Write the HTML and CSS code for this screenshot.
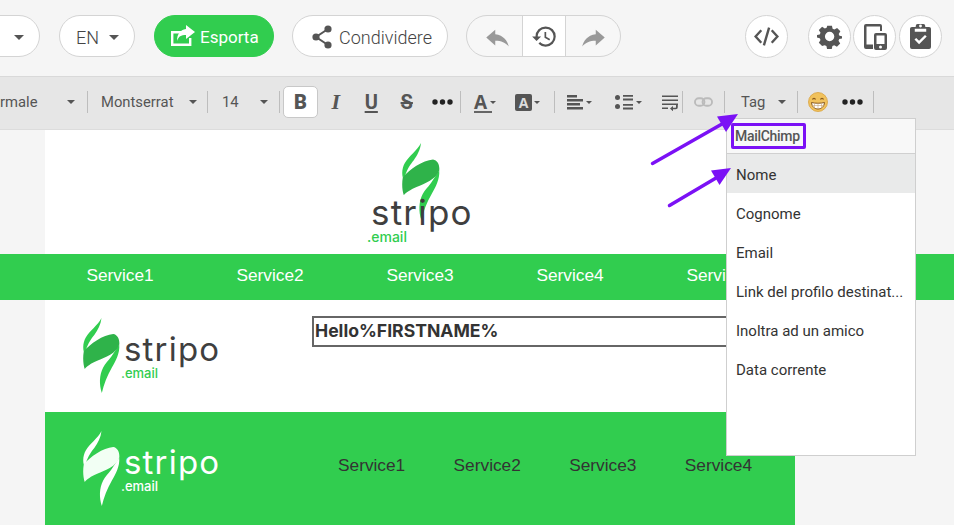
FILE: index.html
```html
<!DOCTYPE html>
<html lang="it">
<head>
<meta charset="utf-8">
<title>Stripo editor</title>
<link rel="stylesheet" href="styles.css">
</head>
<body>
<svg class="defs" width="0" height="0">
  <defs>
    <symbol id="mark" viewBox="0 0 110 224">
      <path class="blade" d="M55 0C53 20 44 36 34 50 24 62 16 74 8 96L2 100C-2 85 2 68 8 58 20 38 44 22 55 0Z"/>
      <path class="blade" d="M108 80C110 105 98 128 86 148 72 172 62 198 56 224 48 200 48 170 60 148 66 136 74 130 84 116Z"/>
      <path class="band" d="M2 100C20 78 60 50 90 48 103 50 110 64 108 80 100 105 66 118 42 128 24 136 10 145 5 152 0 138-1 118 2 100Z"/>
    </symbol>
    <symbol id="reply" viewBox="0 0 24 24"><path d="M10 9V5l-8 7 8 7v-4.100c5.500 0 9 1.600 12 5.100-1-5-4.500-10-12-11z"/></symbol>
    <symbol id="forward" viewBox="0 0 24 24"><path d="M14 9V5l8 7-8 7v-4.100c-5.500 0-9 1.600-12 5.100 1-5 4.500-10 12-11z"/></symbol>
    <symbol id="dots" viewBox="0 0 21 6"><circle cx="3" cy="3" r="2.700"/><circle cx="10.500" cy="3" r="2.700"/><circle cx="18" cy="3" r="2.700"/></symbol>
  </defs>
</svg>

<header class="topbar">
  <div class="pill pill-cut"><span class="caret caret-top"></span></div>
  <div class="pill pill-lang"><span>EN</span><span class="caret caret-top"></span></div>
  <div class="pill pill-export">
    <svg class="ic-export" viewBox="0 0 24 21"><path d="M0 6h11v2.400H2.400v10.200H18V13h2.400v8H0z"/><path d="M15 0l9 7-9 7v-4c-5 0-7.500 1.500-9 6 0-7 3-11 9-12z"/></svg>
    <span>Esporta</span>
  </div>
  <div class="pill pill-share">
    <svg class="ic-share" viewBox="0 0 20 24"><path d="M16 4 4 12l12 8" fill="none" stroke="#555" stroke-width="2"/><circle cx="16" cy="4" r="3.600"/><circle cx="4" cy="12" r="3.600"/><circle cx="16" cy="20" r="3.600"/></svg>
    <span>Condividere</span>
  </div>
  <div class="history">
    <div class="hist-side hist-left"><svg class="ic-arrow"><use href="#reply"/></svg></div>
    <div class="hist-mid">
      <svg class="ic-hist" viewBox="0 0 24 24"><path d="M13 3a9 9 0 0 0-9 9H1l3.890 3.890.07.14L9 12H6c0-3.870 3.130-7 7-7s7 3.130 7 7-3.130 7-7 7c-1.930 0-3.680-.79-4.940-2.060l-1.420 1.420A8.954 8.954 0 0 0 13 21a9 9 0 0 0 0-18zm-1 5v5l4.280 2.540.72-1.210-3.500-2.080V8H12z"/></svg>
    </div>
    <div class="hist-side hist-right"><svg class="ic-arrow"><use href="#forward"/></svg></div>
  </div>
  <div class="circle circle-code">
    <svg class="ic-code" viewBox="0 0 24 20"><path d="M7 4 1.500 10 7 16M17 4l5.500 6-5.500 6M14.500 1.500l-5 17" fill="none" stroke="#555" stroke-width="2.300"/></svg>
  </div>
  <div class="circle circle-gear">
    <svg class="ic-gear" viewBox="0 0 24 24"><path fill-rule="evenodd" d="M9.500 1h5l.7 3.300 1.900.8L20 3.300l3.500 3.500-1.800 2.900.8 1.900 3.300.7v-.3 0L25.800 12v0l0 0-.2 2.500-3.300.7-.8 1.900 1.800 2.900-3.500 3.500-2.900-1.800-1.900.8-.7 3.300h-5l-.7-3.300-1.900-.8L4 22.500 .5 19l1.800-2.900-.8-1.900L-1.800 13.500V11l3.300-.7.8-1.900L.5 5.500 4 2l2.900 1.800 1.900-.8zM12 7.500a5 5 0 1 0 0 10 5 5 0 0 0 0-10z" transform="translate(1.300 .8) scale(.9)"/></svg>
  </div>
  <div class="circle circle-device">
    <svg class="ic-device" viewBox="0 0 24 26"><path d="M3 0h14a2 2 0 0 1 2 2v5h-2V2.500H3.500v18H10V25H3a2 2 0 0 1-2-2V2a2 2 0 0 1 2-2z"/><path fill-rule="evenodd" d="M13 9h9a2 2 0 0 1 2 2v13a2 2 0 0 1-2 2h-9a2 2 0 0 1-2-2V11a2 2 0 0 1 2-2zm.5 2.500V20h8v-8.500zM17.500 21.500a1.500 1.500 0 1 0 0 3 1.500 1.500 0 0 0 0-3z"/></svg>
  </div>
  <div class="circle circle-clip">
    <svg class="ic-clip" viewBox="0 0 22 26"><path fill-rule="evenodd" d="M2 3h4V2a2 2 0 0 1 2-2h6a2 2 0 0 1 2 2v1h4a2 2 0 0 1 2 2v19a2 2 0 0 1-2 2H2a2 2 0 0 1-2-2V5a2 2 0 0 1 2-2zm7.500-1a1.500 1.500 0 1 0 3 0 1.500 1.500 0 0 0-3 0zM5 5v3h12V5zM9.500 21l8-8-1.800-1.700-6.200 6.200-3-3L4.700 16.200z"/></svg>
  </div>
</header>

<nav class="toolbar">
  <div class="tb tb-style"><span class="tb-cut">rmale</span><span class="caret"></span></div>
  <div class="tb tb-font"><span>Montserrat</span><span class="caret"></span></div>
  <div class="tb tb-size"><span>14</span><span class="caret"></span></div>
  <div class="tb tb-format">
    <span class="fmt fmt-b">B</span>
    <span class="fmt fmt-i">I</span>
    <span class="fmt fmt-u">U</span>
    <span class="fmt fmt-s">S</span>
    <svg class="ic-dots"><use href="#dots"/></svg>
  </div>
  <div class="tb tb-color">
    <span class="color-a">A<span class="caret caret-mini"></span></span>
    <span class="color-box"><span class="box-a">A</span><span class="caret caret-mini"></span></span>
  </div>
  <div class="tb tb-para">
    <span class="para-item">
      <svg class="ic-align" viewBox="0 0 16 16"><path d="M0 1h10v2.400H0zM0 5h16v2.400H0zM0 9h13v2.400H0zM0 13h16v2.400H0z"/></svg>
      <span class="caret caret-mini"></span>
    </span>
    <span class="para-item">
      <svg class="ic-list" viewBox="0 0 18 16"><circle cx="2.500" cy="3.500" r="2.500"/><circle cx="2.500" cy="12.500" r="2.500"/><path d="M8 1h10v1.800H8zM8 4.600h10v1.800H8zM8 10h10v1.800H8zM8 13.600h10v1.800H8z"/></svg>
      <span class="caret caret-mini"></span>
    </span>
    <svg class="ic-wrap" viewBox="0 0 16 16"><path d="M0 1h16v1.600H0zM0 5h16v1.600H0zM0 9h16v1.600H0zM0 13h6v1.600H0z"/><path d="M14 9.500h1.800v3.300a2 2 0 0 1-2 2H11v2l-3-2.800L11 11.500v1.700h2.600c.3 0 .4-.1.4-.4z"/></svg>
  </div>
  <div class="tb tb-link">
    <svg class="ic-link" viewBox="0 0 20 12"><rect x="1" y="2" width="10" height="8" rx="4"/><rect x="9" y="2" width="10" height="8" rx="4"/></svg>
  </div>
  <div class="tb tb-tag"><span>Tag</span><span class="caret"></span></div>
  <div class="tb tb-more">
    <svg class="ic-emoji" viewBox="0 0 20 20"><circle cx="10" cy="10" r="9.500" fill="#f1c25c"/><circle cx="10" cy="10" r="9.500" fill="none" stroke="#d9a23e" stroke-width=".8"/><path d="M3.500 10.500c4 1 9 1 13 0-.4 4.500-3.500 6.500-6.500 6.500s-6.100-2-6.500-6.500z" fill="#fff" stroke="#8a5a1c" stroke-width="1"/><path d="M3.500 13.500h13M10 11v6M6.500 11v5.500M13.500 11v5.500" stroke="#c9a877" stroke-width=".6"/><path d="M4.500 7.500c.5-1.500 2.500-1.500 3 0M12.500 7.500c.5-1.500 2.500-1.500 3 0" fill="none" stroke="#8a5a1c" stroke-width="1.200"/></svg>
    <svg class="ic-dots ic-dots-more"><use href="#dots"/></svg>
  </div>
</nav>

<main class="canvas">
  <section class="email-head">
    <div class="logo logo-top">
      <svg class="logo-mark"><use href="#mark"/></svg>
      <span class="logo-word">stripo</span>
      <span class="logo-sub">.email</span>
    </div>
  </section>
  <section class="nav-band">
    <div class="nav-grid">
      <a>Service1</a><a>Service2</a><a>Service3</a><a>Service4</a><a>Service5</a>
    </div>
  </section>
  <section class="hello">
    <div class="logo logo-side">
      <svg class="logo-mark"><use href="#mark"/></svg>
      <span class="logo-word">stripo</span>
      <span class="logo-sub">.email</span>
    </div>
    <div class="hello-box">Hello%FIRSTNAME%</div>
  </section>
  <section class="footer">
    <div class="logo logo-side logo-white">
      <svg class="logo-mark"><use href="#mark"/></svg>
      <span class="logo-word">stripo</span>
      <span class="logo-sub">.email</span>
    </div>
    <div class="foot-nav">
      <a>Service1</a><a>Service2</a><a>Service3</a><a>Service4</a>
    </div>
  </section>
</main>

<aside class="menu">
  <div class="menu-head"><span class="menu-mc">MailChimp</span></div>
  <div class="menu-item menu-active">Nome</div>
  <div class="menu-item">Cognome</div>
  <div class="menu-item">Email</div>
  <div class="menu-item">Link del profilo destinat...</div>
  <div class="menu-item">Inoltra ad un amico</div>
  <div class="menu-item">Data corrente</div>
</aside>

<svg class="arrows" viewBox="0 0 954 525">
  <path class="arrow-line" d="M652.500 163.500 722 124"/>
  <path class="arrow-head" d="M738 114 717 116.500 726 132z"/>
  <path class="arrow-line" d="M669.500 205.500 716 178"/>
  <path class="arrow-head" d="M731 168 711 170.500 719.500 185z"/>
</svg>
</body>
</html>
```
FILE: styles.css
```css
* { box-sizing: border-box; }
html, body { margin: 0; padding: 0; }
body {
  position: relative;
  width: 954px;
  height: 525px;
  overflow: hidden;
  background: #f5f5f5;
  font-family: Roboto, "Liberation Sans", sans-serif;
  color: #555;
}
.defs { position: absolute; }

/* Top bar */
.topbar {
  display: flex;
  align-items: flex-start;
  height: 76px;
  padding: 15px 0 0 0;
  margin-left: -60px;
  background: #f5f5f5;
}
.pill {
  display: flex;
  align-items: center;
  height: 42px;
  padding-top: 2px;
  border: 1px solid #d4d4d4;
  border-radius: 21px;
  background: #fff;
  font-size: 18px;
  font-weight: 300;
  color: #444;
  flex: none;
}
.pill-cut { width: 100px; justify-content: flex-end; padding-right: 15px; margin-right: 19px; }
.pill-lang { width: 76px; padding-left: 16px; gap: 10px; margin-right: 19px; }
.pill-export {
  width: 120px;
  padding-left: 16px;
  gap: 5px;
  margin-right: 18px;
  background: #31cd4f;
  border-color: #31cd4f;
  color: #fff;
  font-size: 17px;
  font-weight: 400;
}
.ic-export { width: 24px; height: 21px; fill: #fff; flex: none; margin-top: -3px; }
.pill-share { width: 156px; padding-left: 19px; gap: 7px; margin-right: 18px; }
.ic-share { width: 20px; height: 24px; fill: #555; flex: none; }

.history {
  display: flex;
  width: 155px;
  height: 42px;
  border: 1px solid #d4d4d4;
  border-radius: 21px;
  background: #f7f7f7;
  margin-right: 124px;
  flex: none;
  overflow: hidden;
}
.hist-side { display: flex; align-items: center; justify-content: center; padding-top: 2px; }
.hist-left { width: 55px; padding-left: 6px; }
.hist-right { flex: 1; }
.hist-mid {
  width: 44px;
  flex: none;
  display: flex;
  align-items: center;
  justify-content: center;
  padding-top: 1px;
  background: #fff;
  border-left: 1px solid #d4d4d4;
  border-right: 1px solid #d4d4d4;
}
.ic-arrow { width: 27px; height: 27px; fill: #999; }
.ic-hist { width: 27px; height: 27px; fill: #555; }
.circle {
  width: 43px;
  height: 43px;
  flex: none;
  display: flex;
  align-items: center;
  justify-content: center;
  border: 1px solid #d4d4d4;
  border-radius: 50%;
  background: #fff;
}
.circle-code { margin-right: 20px; }
.circle-gear { margin-right: 2px; }
.circle-device { margin-right: 3px; }
.ic-code { width: 25px; height: 21px; }
.ic-gear { width: 25px; height: 25px; fill: #555; }
.ic-device { width: 24px; height: 26px; fill: #555; }
.ic-clip { width: 21px; height: 25px; fill: #555; }

.caret {
  display: inline-block;
  width: 0;
  height: 0;
  border-left: 4.5px solid transparent;
  border-right: 4.5px solid transparent;
  border-top: 4.5px solid #555;
  flex: none;
}
.caret-top { border-left-width: 5.500px; border-right-width: 5.500px; border-top-width: 5.500px; }
.caret-mini { border-left-width: 3.500px; border-right-width: 3.500px; border-top-width: 3.500px; }

/* Format toolbar */
.toolbar {
  display: flex;
  align-items: center;
  height: 54px;
  padding-bottom: 2px;
  background: #e6e6e6;
  border-top: 1px solid #d9d9d9;
  border-bottom: 1px solid #dcdcdc;
  font-size: 14.800px;
  color: #555;
}
.tb {
  display: flex;
  align-items: center;
  height: 22px;
  border-right: 1px solid #bdbdbd;
  flex: none;
}
.tb-style { width: 88px; justify-content: space-between; padding-right: 12px; }
.tb-font { width: 120px; justify-content: space-between; padding: 0 10px 0 13px; }
.tb-size { width: 72px; justify-content: space-between; padding: 0 11px 0 14px; }
.tb-format { width: 181px; }
.fmt {
  display: flex;
  align-items: center;
  justify-content: center;
  width: 35.500px;
  font-size: 20px;
  font-weight: 700;
  color: #555;
  flex: none;
}
.fmt-b {
  width: 35px;
  height: 32px;
  margin: -5px 0 -5px 3px;
  background: #fff;
  border: 1px solid #c8c8c8;
  border-radius: 5px;
  font-weight: 900;
}
.fmt-i { font-family: "Liberation Serif", serif; font-style: italic; font-size: 22px; }
.fmt-u { text-decoration: underline; text-decoration-thickness: 2px; text-underline-offset: 2px; }
.fmt-s { text-decoration: line-through; text-decoration-thickness: 2px; }
.ic-dots { width: 21px; height: 6px; fill: #222; flex: none; margin-left: 7px; }
.tb-color { width: 94px; padding-left: 13px; gap: 14px; }
.color-a {
  display: flex;
  align-items: center;
  gap: 3px;
  font-size: 19px;
  font-family: "Open Sans", "Liberation Sans", sans-serif;
  font-weight: 700;
  color: #555;
  background: linear-gradient(#666, #666) 0 21px / 18px 2px no-repeat;
  width: 27px;
  height: 24px;
}
.color-box { display: flex; align-items: center; gap: 2px; }
.box-a {
  display: flex;
  align-items: center;
  justify-content: center;
  width: 17px;
  height: 17px;
  border-radius: 2px;
  background: #555;
  color: #ddd;
  font-size: 14px;
  font-weight: 700;
  font-family: "Open Sans", "Liberation Sans", sans-serif;
}
.tb-para { width: 128px; padding-left: 12px; }
.para-item { display: flex; align-items: center; gap: 3px; }
.para-item:first-child { width: 48px; }
.para-item:nth-child(2) { width: 47px; }
.ic-align { width: 16px; height: 16px; fill: #555; }
.ic-list { width: 18px; height: 16px; fill: #555; }
.ic-wrap { width: 16px; height: 17px; fill: #555; }
.tb-link { width: 42px; padding-left: 11px; }
.ic-link { width: 19px; height: 12px; fill: none; stroke: #bbb; stroke-width: 2; }
.tb-tag { width: 73px; justify-content: space-between; padding: 0 11px 0 16px; }
.tb-more { width: 76px; padding-left: 10px; }
.ic-emoji { width: 20px; height: 20px; flex: none; }
.ic-dots-more { margin-left: 14px; }

/* Email canvas */
.canvas { display: flex; flex-direction: column; }
.email-head {
  width: 750px;
  height: 124px;
  margin-left: 45px;
  background: #fff;
  display: flex;
  justify-content: center;
}
.nav-band { height: 46px; background: #31cd4f; }
.nav-grid {
  display: grid;
  grid-template-columns: repeat(5, 150px);
  width: 750px;
  margin-left: 45px;
  line-height: 43px;
  text-align: center;
  font-family: "Liberation Sans", Arial, sans-serif;
  font-size: 17.300px;
  color: #fff;
}
.hello {
  width: 750px;
  height: 112px;
  margin-left: 45px;
  background: #fff;
  display: flex;
  align-items: flex-start;
}
.footer {
  width: 750px;
  height: 113px;
  margin-left: 45px;
  background: #31cd4f;
  display: flex;
  align-items: flex-start;
}
.hello-box {
  width: 440px;
  height: 31px;
  margin: 16px 0 0 90px;
  border: 2px solid #666;
  background: #fff;
  padding-left: 1px;
  font-family: Inter, "Liberation Sans", sans-serif;
  font-size: 17.600px;
  font-weight: 700;
  line-height: 26px;
  color: #333;
}
.foot-nav {
  display: grid;
  grid-template-columns: repeat(4, 115.600px);
  margin: 42px 0 0 116px;
  text-align: left;
  font-family: "Liberation Sans", Arial, sans-serif;
  font-size: 17.300px;
  line-height: 22px;
  color: #333;
}

/* Logos */
.logo { --blade: #31cd4f; --band: #2fb34a; position: relative; flex: none; }
.logo-mark { position: absolute; width: 37px; height: 75px; }
.blade { fill: var(--blade); }
.band { fill: var(--band); }
.logo-word {
  position: absolute;
  font-family: Inter, "Liberation Sans", sans-serif;
  font-weight: 400;
  color: #3f3f3f;
  line-height: .8;
  letter-spacing: 1.200px;
}
.logo-sub {
  position: absolute;
  font-family: Inter, "Liberation Sans", sans-serif;
  font-size: 13px;
  font-weight: 500;
  line-height: .8;
  color: #31cd4f;
}
.logo-top { width: 100px; height: 120px; }
.logo-top .logo-mark { left: 32px; top: 13px; width: 38px; height: 77px; }
.logo-top .logo-word { left: 1px; top: 68px; font-size: 35px; }
.logo-top .logo-sub { left: -3px; top: 101px; font-size: 14px; }
.logo-side { width: 140px; height: 100px; margin: 18px 0 0 37px; }
.logo-side .logo-mark { left: 1px; top: 0; }
.logo-side .logo-word { left: 42px; top: 18px; font-size: 33px; }
.logo-side .logo-sub { left: 39px; top: 50px; }
.logo-white { --blade: #fff; --band: #f2fff4; }
.logo-white .logo-word, .logo-white .logo-sub { color: #fff; }
.footer .logo-side { margin-top: 19px; }

/* Tag menu */
.menu {
  position: absolute;
  left: 726px;
  top: 118px;
  width: 190px;
  height: 338px;
  border: 1px solid #cfcfcf;
  background: #fff;
  font-size: 15px;
  color: #333;
}
.menu-head {
  height: 35px;
  padding: 4px 0 0 4px;
  background: #f8f8f8;
  border-bottom: 1px solid #d0d0d0;
}
.menu-mc {
  display: inline-block;
  height: 26px;
  width: 75px;
  border: 3px solid #7b11f5;
  border-radius: 2px;
  font-size: 14px;
  font-weight: 500;
  line-height: 20px;
  color: #555;
  white-space: nowrap;
  padding-left: 1px;
  letter-spacing: -.3px;
}
.menu-item {
  height: 39px;
  line-height: 42px;
  padding-left: 9px;
  white-space: nowrap;
}
.menu-active { background: #e9eaea; }

/* Annotation arrows */
.arrows { position: absolute; left: 0; top: 0; width: 954px; height: 525px; pointer-events: none; }
.arrow-line { stroke: #7b11f5; stroke-width: 3.500; fill: none; stroke-linecap: round; }
.arrow-head { fill: #7b11f5; }
```
